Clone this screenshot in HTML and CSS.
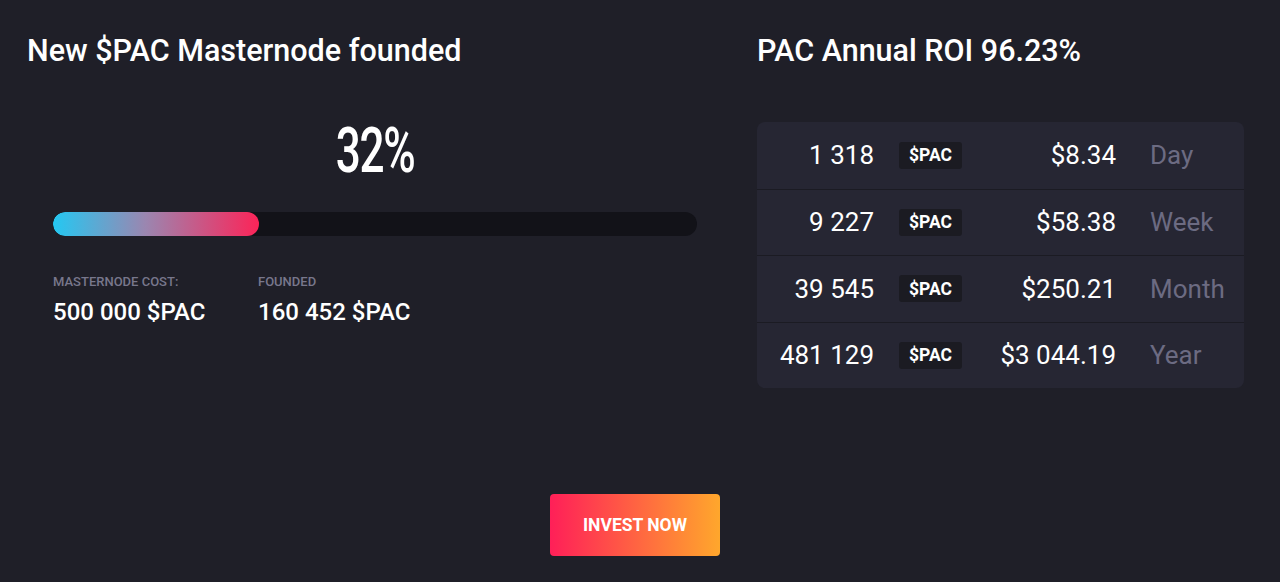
FILE: index.html
```html
<!DOCTYPE html>
<html>
<head>
<meta charset="utf-8">
<link rel="stylesheet" href="styles.css">
</head>
<body>
<div class="page">
  <div class="top">
    <section class="left">
      <h2 class="title">New $PAC Masternode founded</h2>
      <div class="progress-area">
        <div class="percent"><span>32%</span></div>
        <div class="track"><div class="fill" style="width:32%"></div></div>
        <div class="stats">
          <div class="stat">
            <div class="stat-label">MASTERNODE COST:</div>
            <div class="stat-value">500 000 $PAC</div>
          </div>
          <div class="stat">
            <div class="stat-label">FOUNDED</div>
            <div class="stat-value">160 452 $PAC</div>
          </div>
        </div>
      </div>
    </section>
    <section class="right">
      <h2 class="title">PAC Annual ROI 96.23%</h2>
      <div class="card">
        <div class="row"><span class="amt">1 318</span><span class="pill">$PAC</span><span class="usd">$8.34</span><span class="period">Day</span></div>
        <div class="row"><span class="amt">9 227</span><span class="pill">$PAC</span><span class="usd">$58.38</span><span class="period">Week</span></div>
        <div class="row"><span class="amt">39 545</span><span class="pill">$PAC</span><span class="usd">$250.21</span><span class="period">Month</span></div>
        <div class="row"><span class="amt">481 129</span><span class="pill">$PAC</span><span class="usd">$3 044.19</span><span class="period">Year</span></div>
      </div>
    </section>
  </div>
  <div class="cta">
    <button class="invest">INVEST NOW</button>
  </div>
</div>
</body>
</html>
```
FILE: styles.css
```css
* { box-sizing: border-box; }
html, body { margin: 0; padding: 0; }
body {
  background: #1f1f28;
  color: #ffffff;
  font-family: Roboto, "Liberation Sans", sans-serif;
  width: 1280px;
  height: 582px;
  overflow: hidden;
}
.page { padding: 33px 0 0 27px; }
.top { display: flex; }
.left { width: 730px; }
.right { width: 487px; }
.title {
  margin: 0;
  font-size: 30.5px;
  font-weight: 500;
  line-height: 36px;
  letter-spacing: 0;
}
.progress-area { margin: 0 60px 0 26px; }
.percent {
  text-align: center;
  margin-top: 47px;
  height: 70px;
}
.percent span {
  display: inline-block;
  font-size: 63px;
  font-weight: 500;
  line-height: 70px;
  transform: scaleX(0.7);
  letter-spacing: -2px;
}
.track {
  margin-top: 26px;
  height: 24px;
  border-radius: 12px;
  background: #121218;
  overflow: hidden;
}
.fill {
  height: 100%;
  border-radius: 12px;
  background: linear-gradient(90deg, #24c8f2 0%, #9b86b0 45%, #fc2458 100%);
}
.stats { display: flex; margin-top: 38px; }
.stat { width: 205px; }
.stat-label {
  font-size: 13px;
  font-weight: 500;
  color: #78778c;
  line-height: 15px;
}
.stat-value {
  margin-top: 9px;
  font-size: 24px;
  font-weight: 500;
  line-height: 28px;
}
.card {
  margin-top: 53px;
  background: #262633;
  border-radius: 8px;
  overflow: hidden;
}
.row {
  display: flex;
  align-items: center;
  height: 66.5px;
  border-top: 1px solid #1b1b23;
}
.row:first-child { border-top: none; }
.amt {
  width: 117px;
  text-align: right;
  font-size: 26px;
  line-height: 30px;
}
.pill {
  margin-left: 25px;
  width: 63px;
  height: 27px;
  border-radius: 3px;
  background: #1b1b22;
  font-size: 17.5px;
  font-weight: 700;
  display: flex;
  align-items: center;
  justify-content: center;
}
.usd {
  width: 154px;
  text-align: right;
  font-size: 26px;
  line-height: 30px;
}
.period {
  margin-left: 34px;
  font-size: 26px;
  line-height: 30px;
  color: #6c6b82;
}
.cta { display: flex; justify-content: center; margin-top: 106px; padding-right: 37px; }
.invest {
  width: 170px;
  height: 62px;
  border: none;
  border-radius: 4px;
  background: linear-gradient(90deg, #ff1f58 0%, #ffa72c 100%);
  color: #fff;
  font-family: Roboto, "Liberation Sans", sans-serif;
  font-size: 17.5px;
  font-weight: 700;
}
```
